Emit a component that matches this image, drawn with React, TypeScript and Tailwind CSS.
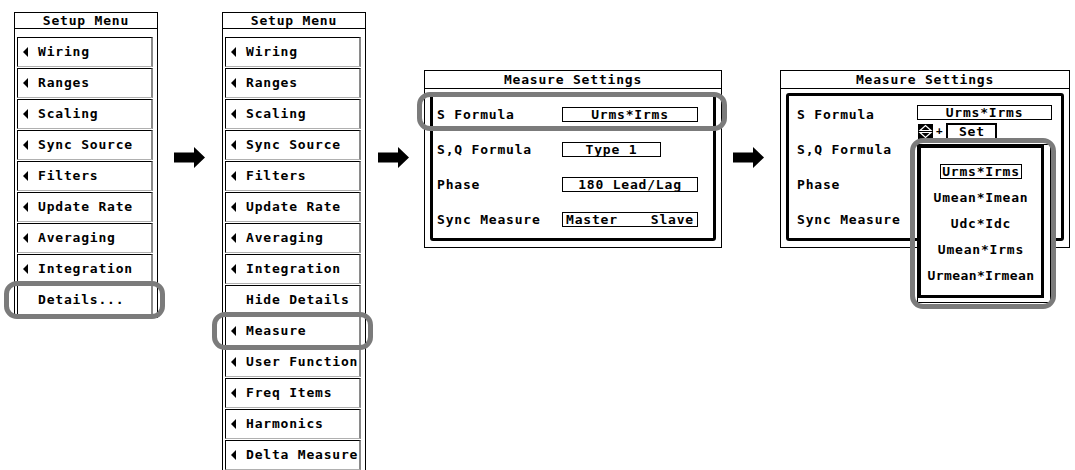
const MENU_1 = ['Wiring', 'Ranges', 'Scaling', 'Sync Source', 'Filters', 'Update Rate', 'Averaging', 'Integration'];
const MENU_2 = ['Measure', 'User Function', 'Freq Items', 'Harmonics', 'Delta Measure'];

type MenuItem = { label: string; arrow: boolean; highlight?: boolean };

const LeftTri = () => (
  <svg width="5" height="10" viewBox="0 0 5 10" className="shrink-0">
    <path d="M5 0V10L0 5Z" fill="black" />
  </svg>
);

const BigArrow = ({ className }: { className: string }) => (
  <svg width="31" height="21" viewBox="0 0 31 21" className={className}>
    <path d="M0 5.5H20V0L31 10.5L20 21V15.5H0Z" fill="black" />
  </svg>
);

// rounded grey ring drawn over the thing being pointed at
const Ring = ({ className }: { className: string }) => (
  <div className={`pointer-events-none absolute z-10 rounded-[13px] border-[5px] border-[#7b7b7b] ${className}`} />
);

const SetupMenu = ({ items, className }: { items: MenuItem[]; className: string }) => (
  <div className={`relative w-[144px] shrink-0 border border-black bg-white ${className}`}>
    <div className="h-[16px] border-b border-black text-center leading-[15px]">Setup Menu</div>
    <div className="flex flex-col gap-px pl-[2px] pr-[4px] pt-[8px] pb-[2px]">
      {items.map((it) => (
        <div key={it.label} className="relative flex h-[30px] items-center border-t border-l border-black border-r-2 border-r-[#8a8a8a] border-b border-b-[#b0b0b0] pl-[5px]">
          {it.arrow ? <LeftTri /> : <span className="w-[5px]" />}
          <span className="ml-[10px] whitespace-nowrap">{it.label}</span>
          {it.highlight && <Ring className="-left-[14px] -right-[14px] -top-[5px] -bottom-[5px]" />}
        </div>
      ))}
    </div>
  </div>
);

const ValueBox = ({ children, className }: { children: React.ReactNode; className: string }) => (
  <div className={`flex h-[15px] items-center border border-black leading-none whitespace-pre ${className}`}>
    {children}
  </div>
);

const Row = ({ label, labelW, children }: { label: string; labelW: string; children?: React.ReactNode }) => (
  <div className="flex h-[35px] items-center">
    <span className={`shrink-0 whitespace-nowrap ${labelW}`}>{label}</span>
    {children}
  </div>
);

const PanelFrame = ({ className, inner, children }: { className: string; inner: string; children: React.ReactNode }) => (
  <div className={`relative shrink-0 border border-black bg-white ${className}`}>
    <div className="h-[18px] border-b border-black text-center leading-[17px]">Measure Settings</div>
    <div className="px-[5px] pt-[4px] pb-[6px]">
      <div className={`rounded-[3px] border-[3px] border-black pt-[1px] pb-[1px] ${inner}`}>{children}</div>
    </div>
  </div>
);

const Spinner = () => (
  <svg width="15" height="15" viewBox="0 0 15 15">
    <rect width="15" height="15" fill="black" />
    <path d="M2 6.5L7.5 1.5L13 6.5Z" fill="black" stroke="white" strokeWidth="1.2" />
    <path d="M2 8.5L7.5 13.5L13 8.5Z" fill="black" stroke="white" strokeWidth="1.2" />
  </svg>
);

export default function App() {
  const menu1: MenuItem[] = [
    ...MENU_1.map((l) => ({ label: l, arrow: true })),
    { label: 'Details...', arrow: false, highlight: true },
  ];
  const menu2: MenuItem[] = [
    ...MENU_1.map((l) => ({ label: l, arrow: true })),
    { label: 'Hide Details', arrow: false },
    ...MENU_2.map((l, i) => ({ label: l, arrow: true, highlight: i === 0 })),
  ];

  return (
    <div className="relative flex h-[470px] w-[1075px] items-start overflow-hidden bg-white pl-[14px] text-[13px] font-bold tracking-[0.8px] text-black [font-family:'DejaVu_Sans_Mono',monospace]">
      <SetupMenu items={menu1} className="mt-[12px]" />
      <BigArrow className="mt-[147px] ml-[16px] shrink-0" />
      <SetupMenu items={menu2} className="mt-[12px] ml-[17px]" />
      <BigArrow className="mt-[147px] ml-[12px] shrink-0" />

      {/* settings, S Formula highlighted */}
      <PanelFrame className="mt-[70px] ml-[15px] w-[298px]" inner="pl-[4px]">
        <Row label="S Formula" labelW="w-[125px]">
          <ValueBox className="w-[136px] justify-center">Urms*Irms</ValueBox>
        </Row>
        <Row label="S,Q Formula" labelW="w-[125px]">
          <ValueBox className="w-[99px] justify-center">Type 1</ValueBox>
        </Row>
        <Row label="Phase" labelW="w-[125px]">
          <ValueBox className="w-[136px] justify-center">180 Lead/Lag</ValueBox>
        </Row>
        <Row label="Sync Measure" labelW="w-[125px]">
          <ValueBox className="w-[136px] justify-between px-[3px]">
            <span>Master</span>
            <span>Slave</span>
          </ValueBox>
        </Row>
        <Ring className="-left-[8px] -right-[6px] top-[21px] h-[39px]" />
      </PanelFrame>

      <BigArrow className="mt-[147px] ml-[11px] shrink-0" />

      {/* settings, S Formula list open */}
      <PanelFrame className="mt-[70px] ml-[16px] w-[290px]" inner="pl-[8px]">
        <Row label="S Formula" labelW="w-[120px]">
          <ValueBox className="-mt-[5px] w-[135px] justify-center">Urms*Irms</ValueBox>
        </Row>
        <Row label="S,Q Formula" labelW="w-[120px]" />
        <Row label="Phase" labelW="w-[120px]" />
        <Row label="Sync Measure" labelW="w-[120px]" />

        <div className="absolute left-[137px] top-[52px] z-20 flex items-center">
          <Spinner />
          <span className="ml-[3px] text-[11px]">+</span>
          <div className="ml-[3px] flex h-[17px] w-[51px] items-center justify-center border-2 border-black bg-white leading-none">Set</div>
        </div>

        <div className="absolute left-[136px] top-[73px] z-20 border border-black bg-white pr-[6px] pb-[4px]">
          <div className="flex h-[153px] w-[126px] flex-col items-center border-[3px] border-black pt-[16px]">
            <div className="flex h-[15px] items-center border border-black px-[1px] leading-none">Urms*Irms</div>
            <div className="mt-[11px] leading-[15px]">Umean*Imean</div>
            <div className="mt-[11px] leading-[15px]">Udc*Idc</div>
            <div className="mt-[11px] leading-[15px]">Umean*Irms</div>
            <div className="mt-[11px] leading-[15px] tracking-[0.4px]">Urmean*Irmean</div>
          </div>
        </div>
        <Ring className="left-[129px] top-[67px] z-30 h-[171px] w-[146px]" />
      </PanelFrame>
    </div>
  );
}
